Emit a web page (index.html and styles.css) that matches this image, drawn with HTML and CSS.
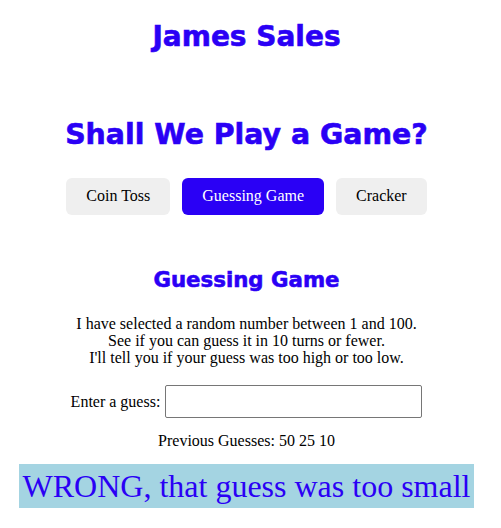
FILE: index.html
```html
<!DOCTYPE html>
<html>
<head>
<meta charset="utf-8">
<link rel="stylesheet" href="styles.css">
</head>
<body>
<header class="site-header">
  <h1 class="site-title">James Sales</h1>
</header>
<main class="main">
  <h1 class="page-title">Shall We Play a Game?</h1>
  <nav class="game-nav">
    <button class="game-btn">Coin Toss</button>
    <button class="game-btn active">Guessing Game</button>
    <button class="game-btn">Cracker</button>
  </nav>
  <section class="game">
    <h2 class="game-title">Guessing Game</h2>
    <p class="intro">I have selected a random number between 1 and 100.<br>See if you can guess it in 10 turns or fewer.<br>I'll tell you if your guess was too high or too low.</p>
    <div class="guess-row">
      <label class="guess-label" for="guess">Enter a guess:</label>
      <input class="guess-input" id="guess" type="text">
    </div>
    <p class="previous">Previous Guesses: 50 25 10</p>
    <div class="result">WRONG, that guess was too small</div>
  </section>
</main>
</body>
</html>
```
FILE: styles.css
```css
body {
  margin: 8px;
  padding-right: 8px;
  font-family: "Liberation Serif", "Times New Roman", serif;
  font-size: 16px;
  color: #000;
  background: #fff;
  text-align: center;
}
.site-title, .page-title, .game-title {
  font-family: "DejaVu Sans", Verdana, sans-serif;
  font-weight: 700;
  color: #2a00f5;
  -webkit-text-stroke: 0.6px #2a00f5;
  margin: 0;
}
.site-title {
  font-size: 28px;
  line-height: 34px;
  margin-top: 12px;
}
.main {
  display: flex;
  flex-direction: column;
  align-items: center;
}
.page-title {
  font-size: 28.4px;
  line-height: 34px;
  margin-top: 64px;
}
.game-nav {
  display: flex;
  gap: 12px;
  margin-top: 26px;
}
.game-btn {
  font-family: "Liberation Serif", "Times New Roman", serif;
  font-size: 16px;
  line-height: 18px;
  padding: 9px 20px 10px;
  border: none;
  border-radius: 6px;
  background: #efefef;
  color: #000;
}
.game-btn.active {
  background: #2a00f5;
  color: #fff;
}
.game {
  display: flex;
  flex-direction: column;
  align-items: center;
}
.game-title {
  font-size: 21.3px;
  line-height: 26px;
  margin-top: 52px;
}
.intro {
  margin: 22px 0 0;
  line-height: 17px;
}
.guess-row {
  display: flex;
  align-items: center;
  gap: 5px;
  margin-top: 19px;
}
.guess-input {
  width: 257px;
  height: 33px;
  box-sizing: border-box;
  border: 1px solid #767676;
  border-radius: 2px;
  font-size: 16px;
}
.previous {
  margin: 14px 0 0;
}
.result {
  margin-top: 14px;
  background: #a4d4e2;
  color: #2a00f5;
  font-size: 32px;
  line-height: 44px;
  padding: 0 4px;
}
```
